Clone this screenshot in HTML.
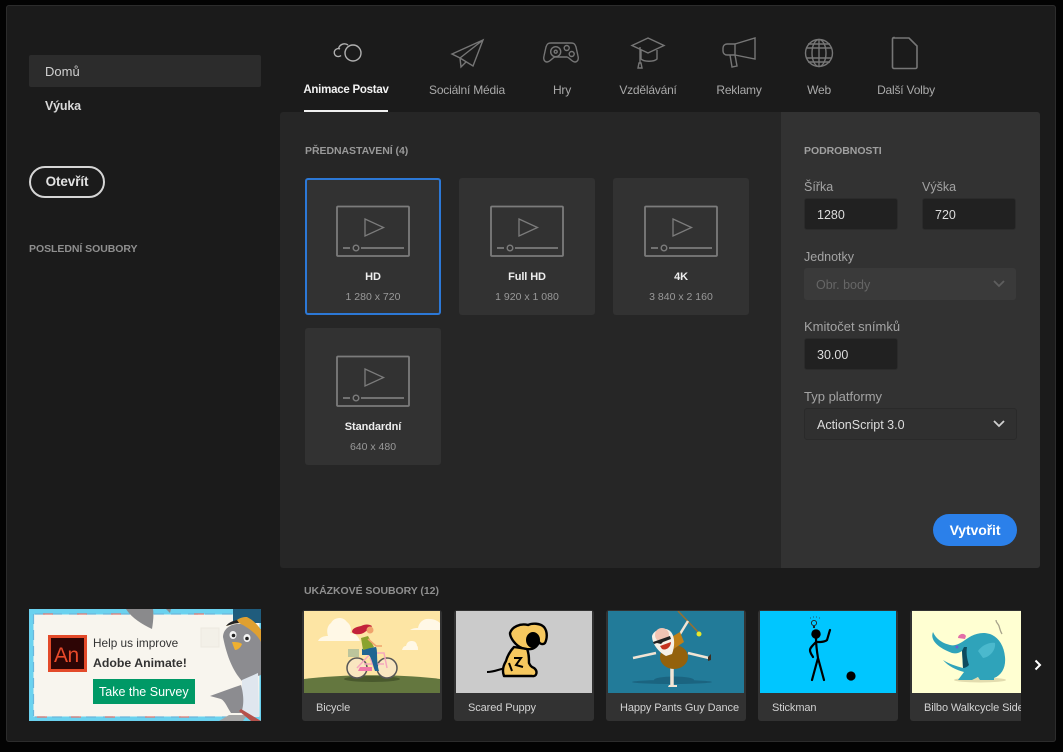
<!DOCTYPE html>
<html lang="cs"><head><meta charset="utf-8"><title>Adobe Animate</title>
<style>
html,body{margin:0;padding:0;width:1063px;height:752px;overflow:hidden;background:#030303;font-family:"Liberation Sans",sans-serif;}
.a{position:absolute;white-space:nowrap;}
.t{position:absolute;white-space:nowrap;font-size:12px;line-height:14px;letter-spacing:-.2px;text-align:center;color:#a9a9a9;}
.h{position:absolute;white-space:nowrap;font-size:10.5px;line-height:12px;font-weight:bold;color:#8f8f8f;letter-spacing:-.05px;}
.card{position:absolute;width:136px;height:137px;background:#323232;border-radius:3px;}
.card svg{position:absolute;left:31px;top:27px;}
.card b{position:absolute;left:0;right:0;top:92px;text-align:center;font-size:11px;line-height:14px;color:#eee;letter-spacing:-.1px;}
.card i{position:absolute;left:0;right:0;top:112px;text-align:center;font-style:normal;font-size:10.5px;line-height:14px;color:#999;}
.lab{position:absolute;font-size:13px;line-height:16px;color:#a3a3a3;white-space:nowrap;}
.inp{position:absolute;height:32px;background:#212121;border:1px solid #2b2b2b;border-radius:3px;box-sizing:border-box;color:#ddd;font-size:12.5px;line-height:31px;padding-left:12px;padding-top:1px;}
.s{position:absolute;width:140px;height:111px;top:610px;background:#323232;border-radius:3px;overflow:hidden;}
.s svg{position:absolute;left:2px;top:1px;display:block;}
.s span{position:absolute;left:14px;top:91px;font-size:11px;line-height:14px;color:#d2d2d2;white-space:nowrap;letter-spacing:-.1px;}
</style></head><body>
<div class="a" style="left:6px;top:5px;width:1050px;height:737px;background:#1b1b1b;border-radius:3px;box-shadow:0 0 0 1px #2c2c2c inset;"></div>

<div class="a" style="left:29px;top:55px;width:232px;height:32px;background:#2c2c2c;border-radius:2px;"></div>
<div class="a" style="left:45px;top:65px;font-size:13px;line-height:14px;color:#d0d0d0;">Domů</div>
<div class="a" style="left:45px;top:99px;font-size:12.5px;line-height:14px;font-weight:bold;color:#d8d8d8;letter-spacing:-.2px;">Výuka</div>
<div class="a" style="left:29px;top:166px;width:76px;height:32px;box-sizing:border-box;border:2px solid #d5d5d5;border-radius:16px;text-align:center;font-size:13.5px;line-height:28px;font-weight:bold;color:#e2e2e2;letter-spacing:-.1px;">Otevřít</div>
<div class="h" style="left:29px;top:243px;">POSLEDNÍ SOUBORY</div>

<!-- Top icons -->
<svg class="a" style="left:320px;top:30px;" width="640" height="50" viewBox="320 30 640 50" fill="none" stroke="#767676" stroke-width="1.400">
<g stroke="#b0b0b0"><circle cx="353" cy="53" r="8"/><path d="M338.500 49A6 6 0 0 1 348 45"/><path d="M340 49A4 4 0 1 0 341 55.500"/></g>
<path d="M483 40L452 54 460 58 473 66zM483 40L460 58 461 67 466 62"/>
<g><path d="M553 43h18c3 0 4 1 5 4l2 9c1 4-1 6-3 6-3 0-5-4-8-5h-12c-3 1-5 5-8 5-2 0-4-2-3-6l2-9c1-3 2-4 5-4z"/><circle cx="555.700" cy="51.700" r="5"/><circle cx="555.700" cy="51.700" r="1.500"/><circle cx="566.700" cy="48" r="2.500"/><circle cx="571.700" cy="54" r="2.500"/></g>
<g><path d="M648 38l16 7.500-16 7.500-16-7.500z"/><path d="M641 50v9c3 3 13 3 16 0v-9"/><path d="M640 47v16"/><path d="M638 68l1-5h2l1 5z"/></g>
<g><path d="M735 44h-8a4 4 0 0 0-4 4v3a4 4 0 0 0 4 4h8z"/><path d="M735 44l20-6v21l-20-4"/><path d="M730 55l2 12 5-1-2-11"/></g>
<g><circle cx="819" cy="53" r="13.500"/><ellipse cx="819" cy="53" rx="7" ry="13.500"/><path d="M819 39.500v27M806 48h26M806 58h26M808 44h22M808 62h22"/></g>
<path stroke-width="1.600" d="M894 38h15l8 8v21a1.500 1.500 0 0 1-1.500 1.500h-21.500a1.500 1.500 0 0 1-1.500-1.500v-28a1.500 1.500 0 0 1 1.500-1.500z"/>
</svg>

<div class="t" style="left:298px;top:83px;width:96px;color:#f2f2f2;font-weight:bold;font-size:11.500px;letter-spacing:-.25px;">Animace Postav</div>
<div class="a" style="left:304px;top:110px;width:84px;height:2px;background:#f0f0f0;"></div>
<div class="t" style="left:417px;top:83px;width:100px;">Sociální Média</div>
<div class="t" style="left:542px;top:83px;width:40px;">Hry</div>
<div class="t" style="left:608px;top:83px;width:80px;">Vzdělávání</div>
<div class="t" style="left:704px;top:83px;width:70px;">Reklamy</div>
<div class="t" style="left:799px;top:83px;width:40px;">Web</div>
<div class="t" style="left:866px;top:83px;width:80px;">Další Volby</div>

<!-- Main panel -->
<div class="a" style="left:280px;top:112px;width:760px;height:456px;background:#262626;border-radius:3px;overflow:hidden;">
  <div class="a" style="left:501px;top:0;width:259px;height:456px;background:#323232;"></div>
</div>
<div class="h" style="left:305px;top:145px;color:#999;">PŘEDNASTAVENÍ (4)</div>

<div class="card" style="left:305px;top:178px;box-sizing:border-box;box-shadow:inset 0 0 0 2px #2c78d6;">
<svg width="74" height="60" viewBox="0 0 74 60" fill="none" stroke="#7c7c7c" stroke-width="1.800"><rect x="1" y="1.500" width="72" height="49.500" rx="1"/><path stroke-width="1.300" d="M29 14l18.500 8.500-18.500 8.500z"/><path d="M7 43h7M25 43h43"/><circle cx="20" cy="43" r="2.800" stroke-width="1.400"/></svg>
<b>HD</b><i>1 280 x 720</i></div>
<div class="card" style="left:459px;top:178px;">
<svg width="74" height="60" viewBox="0 0 74 60" fill="none" stroke="#7c7c7c" stroke-width="1.800"><rect x="1" y="1.500" width="72" height="49.500" rx="1"/><path stroke-width="1.300" d="M29 14l18.500 8.500-18.500 8.500z"/><path d="M7 43h7M25 43h43"/><circle cx="20" cy="43" r="2.800" stroke-width="1.400"/></svg>
<b>Full HD</b><i>1 920 x 1 080</i></div>
<div class="card" style="left:613px;top:178px;">
<svg width="74" height="60" viewBox="0 0 74 60" fill="none" stroke="#7c7c7c" stroke-width="1.800"><rect x="1" y="1.500" width="72" height="49.500" rx="1"/><path stroke-width="1.300" d="M29 14l18.500 8.500-18.500 8.500z"/><path d="M7 43h7M25 43h43"/><circle cx="20" cy="43" r="2.800" stroke-width="1.400"/></svg>
<b>4K</b><i>3 840 x 2 160</i></div>
<div class="card" style="left:305px;top:328px;">
<svg width="74" height="60" viewBox="0 0 74 60" fill="none" stroke="#7c7c7c" stroke-width="1.800"><rect x="1" y="1.500" width="72" height="49.500" rx="1"/><path stroke-width="1.300" d="M29 14l18.500 8.500-18.500 8.500z"/><path d="M7 43h7M25 43h43"/><circle cx="20" cy="43" r="2.800" stroke-width="1.400"/></svg>
<b>Standardní</b><i>640 x 480</i></div>

<!-- Details -->
<div class="h" style="left:804px;top:145px;color:#a0a0a0;">PODROBNOSTI</div>
<div class="lab" style="left:804px;top:179px;font-size:12.5px;">Šířka</div>
<div class="lab" style="left:922px;top:179px;font-size:12.5px;">Výška</div>
<div class="inp" style="left:804px;top:198px;width:94px;">1280</div>
<div class="inp" style="left:922px;top:198px;width:94px;">720</div>
<div class="lab" style="left:804px;top:249px;font-size:12.5px;">Jednotky</div>
<div class="inp" style="left:804px;top:268px;width:212px;background:#3a3a3a;border-color:#3a3a3a;color:#666;padding-left:11px;">Obr. body</div>
<svg class="a" style="left:993px;top:280px;" width="12" height="8" fill="none" stroke="#5e5e5e" stroke-width="1.800"><path d="M1 1l5 5 5-5"/></svg>
<div class="lab" style="left:804px;top:319px;">Kmitočet snímků</div>
<div class="inp" style="left:804px;top:338px;width:94px;">30.00</div>
<div class="lab" style="left:804px;top:389px;">Typ platformy</div>
<div class="inp" style="left:804px;top:408px;width:213px;background:#303030;border-color:#2a2a2a;">ActionScript 3.0</div>
<svg class="a" style="left:993px;top:420px;" width="12" height="8" fill="none" stroke="#d0d0d0" stroke-width="1.800"><path d="M1 1l5 5 5-5"/></svg>
<div class="a" style="left:933px;top:514px;width:84px;height:32px;border-radius:16px;background:#2b80ea;color:#fff;font-size:14px;font-weight:bold;line-height:32px;text-align:center;letter-spacing:-.1px;">Vytvořit</div>

<!-- Samples -->
<div class="h" style="left:304px;top:585px;color:#8f8f8f;">UKÁZKOVÉ SOUBORY (12)</div>

<div class="s" style="left:302px;">
<svg width="136" height="82" viewBox="0 0 136 82"><rect width="136" height="82" fill="#fde5a4"/>
<path d="M14 30c2-4 6-5 10-5-2-6 0-11 3-13 3-6 12-7 16-1 4 3 5 8 3 11 5 0 8 3 10 8z" fill="#fff8e6"/>
<path d="M106 19c3-2 6-2 8-2 1-6 6-10 12-9 4 0 8 2 10 4v7z" fill="#fff8e6"/>
<path d="M98 39c1-3 2-4 4-4 1-4 3-5 6-5 3 0 5 2 5 5 1 0 1 2 1 4z" fill="#fff8e6"/>
<path d="M0 68c40-5 96-5 136 0v14H0z" fill="#64773f"/>
<ellipse cx="68" cy="68" rx="28" ry="3" fill="#49592d"/>
<g fill="#f9e6c0" stroke="#575757" stroke-width="1.500"><circle cx="53" cy="57" r="10"/><circle cx="83" cy="57" r="10"/></g>
<path d="M53 57l14-15h13l3 15M60 53h20M66 47l5 11" fill="none" stroke="#f5a6bd" stroke-width="1.500"/>
<rect x="44" y="38" width="11" height="8" fill="#bcc59c"/>
<path d="M58 38l14-2c2 4 0 14 3 24h-4c-2-5-3-12-6-16h-7z" fill="#1f6592"/>
<path d="M57 27l7-2 6 11-11 3z" fill="#8aa32e"/>
<path d="M64 28l8 7h6" fill="none" stroke="#f0a36c" stroke-width="1.500"/>
<path d="M48 21c0-4 5-5 9-6 4-2 8-2 11 0-2 4-5 4-7 6-4 3-11 3-13 0z" fill="#c3213a"/>
<circle cx="66" cy="19" r="3.500" fill="#f0a36c"/>
<path d="M56 56h12v4H54z" fill="#f078a8"/></svg>
<span>Bicycle</span></div>

<div class="s" style="left:454px;">
<svg width="136" height="82" viewBox="0 0 136 82"><rect width="136" height="82" fill="#cbcbcb"/>
<path d="M31 61c8 0 12-3 19-4" fill="none" stroke="#000" stroke-width="2"/>
<path d="M58 36c-4 4-7 10-8 14-3 5-4 10-2 15h28c5 1 6-5 2-8-3-1-4-3-5-5 0-5 0-10-2-14z" fill="#f6c85f" stroke="#000" stroke-width="2.400" stroke-linejoin="round"/>
<path d="M54 22c2-6 10-10 18-8 4-2 12-2 16 2 4 5 3 12 1 16-2 2-5 1-6-1-2 5-6 8-12 7l-5-1c-6-2-12-10-12-15z" fill="#f6c85f" stroke="#000" stroke-width="2.400" stroke-linejoin="round"/>
<ellipse cx="77" cy="29" rx="7" ry="8" fill="#000"/>
<path d="M58 47h7l-5 7 7 2M53 52l3 8" fill="none" stroke="#000" stroke-width="2"/></svg>
<span>Scared Puppy</span></div>

<div class="s" style="left:606px;">
<svg width="136" height="82" viewBox="0 0 136 82"><rect width="136" height="82" fill="#227b99"/>
<ellipse cx="64" cy="71" rx="40" ry="2" fill="#1b6480"/>
<ellipse cx="66" cy="69" rx="20" ry="3.500" fill="#1b6480"/>
<path d="M70 0l21 22" stroke="#9a6f2f" stroke-width="1.500"/>
<circle cx="91" cy="23" r="2.500" fill="#e6e82c"/>
<path d="M72 23l8-13" stroke="#f1e4d4" stroke-width="2.500"/>
<path d="M48 42L25 47M80 42l21 5" stroke="#f1e4d4" stroke-width="2.500"/>
<path d="M100 46l3-3 0 6-3 1z" fill="#3c3024"/>
<path d="M64 74V56" stroke="#f1e4d4" stroke-width="3.500"/>
<path d="M60 76h9v-2h-8z" fill="#f1e4d4"/>
<ellipse cx="66" cy="46" rx="14" ry="12" fill="#93610c"/>
<path d="M60 28l12-7 4 10-12 8z" fill="#c07f16"/>
<path d="M44 25c2-7 14-10 19-4 4 5 4 14 1 22l-6 2c-6-3-14-11-14-20z" fill="#f6f0e6"/>
<circle cx="54" cy="24" r="7" fill="#f1c4b3"/>
<path d="M45 31l17-6 1 3-8 3-2 2-4-1-3 1z" fill="#222"/>
<path d="M52 35l11-4c0 5-5 9-9 7z" fill="#c5321f"/></svg>
<span>Happy Pants Guy Dance</span></div>

<div class="s" style="left:758px;">
<svg width="136" height="82" viewBox="0 0 136 82"><rect width="136" height="82" fill="#00c6ff"/>
<circle cx="56" cy="23" r="4.700" fill="#000"/>
<path d="M56 27c0 7 1 14 2 20l-6 22M58 47l6 22M57 31c4 0 8 0 10-2 1-3 2-7 3-10M56 31c-3 3-6 6-6 8 0 3 2 5 3 7" fill="none" stroke="#000" stroke-width="2.200" stroke-linecap="round"/>
<circle cx="91" cy="65" r="4.600" fill="#000"/>
<circle cx="54" cy="12" r="2.600" fill="none" stroke="#222" stroke-width=".9"/>
<path d="M53 15h2v2h-2z" fill="#222"/>
<path d="M50 7h1M53 6h1M56 6h1M59 7h1" stroke="#333" stroke-width=".7"/></svg>
<span>Stickman</span></div>

<div class="s" style="left:910px;width:111px;border-radius:3px 0 0 3px;">
<svg width="109" height="82" viewBox="0 0 109 82"><rect width="109" height="82" fill="#ffffd2"/>
<ellipse cx="68" cy="69" rx="26" ry="2.500" fill="#e2dcae"/>
<path d="M21 21C18 28 24 36 40 42 44 43 47 42 50 40L51 57C44 55 37 53 31 49 36 55 44 59 52 61L46 69H60L66 66 68 69H82V67C90 64 94 56 93 46 92 34 86 26 78 23 68 20 60 24 53 29 46 34 42 35 38 34 30 32 24 28 21 21z" fill="#2fa3ba"/>
<path d="M52 36l-2 4 1 17c2 0 4-1 6-3-2-6-3-12-2-18z" fill="#0d4b5e"/>
<path d="M46 27c0-4 6-6 8-2l-1 3z" fill="#e36fa8"/>
<circle cx="45" cy="36" r="1.500" fill="#6b5fd0"/>
<path d="M66 40c4-6 12-9 17-8 1 7-5 14-12 15z" fill="#4bb9cd"/>
<path d="M90 23c-2-3-2-5-3-8-1-3-3-3-3-6" fill="none" stroke="#a8a48c" stroke-width="1.300"/></svg>
<span style="width:109px;overflow:hidden;">Bilbo Walkcycle Side</span></div>

<svg class="a" style="left:1033px;top:659px;" width="10" height="12" fill="none" stroke="#fff" stroke-width="2"><path d="M2.500 1.500l4.500 4.500-4.500 4.500"/></svg>

<!-- Survey banner -->
<div class="a" style="left:29px;top:609px;width:232px;height:112px;overflow:hidden;">
<svg width="232" height="112" viewBox="0 0 232 112" style="display:block;">
<rect width="232" height="112" fill="#6bd2ef"/>
<rect x="4.500" y="5.500" width="226" height="102" fill="#f8f5ee"/>
<path d="M6 5h220" stroke="#6bb7dc" stroke-width="1.200" stroke-dasharray="10 7"/>
<path d="M14 5h10M48 5h10M82 5h10M165 5h10" stroke="#de7a75" stroke-width="1.200"/>
<path d="M6 108h220" stroke="#6bb7dc" stroke-width="1.200" stroke-dasharray="10 7"/>
<path d="M8 108h10M42 108h10M76 108h10M116 108h10M150 108h10" stroke="#de7a75" stroke-width="1.200"/>
<path d="M4.500 5v102" stroke="#6bb7dc" stroke-width="1.200" stroke-dasharray="10 6"/>
<rect x="172" y="19" width="18" height="19" fill="#f3f0e8" stroke="#ece9e0"/>
<path d="M97 0c5 8 15 15 26 20 1-6 2-14 1-20z" fill="#8a8a8c"/>
<path d="M137 0l4 4 1-4z" fill="#8a8a8c"/>
<rect x="19" y="26" width="39" height="37" fill="#e34a2a"/>
<rect x="22" y="29" width="33" height="31" fill="#2d0505"/>
<rect x="204" y="0" width="28" height="14" fill="#1f5c7d"/>
<path d="M194 28C194 20 202 14 212 15L232 20V66L213 72C204 62 198 48 194 28z" fill="#8c8c90"/>
<path d="M197 17c4-4 8-5 11-6 4-3 8-3 10-3 6 3 11 8 14 13v12c-4-8-12-14-22-19-4 0-9 2-13 3z" fill="#e0a030"/>
<path d="M197 17c3-4 7-5 11-6l2 3c-4 0-9 2-13 3z" fill="#222"/>
<ellipse cx="204" cy="26" rx="3.500" ry="4" fill="#f4f4f4"/><ellipse cx="218" cy="29" rx="3.500" ry="4" fill="#f4f4f4"/>
<circle cx="204.500" cy="26.500" r="1.800" fill="#222"/><circle cx="218" cy="29.500" r="1.800" fill="#222"/>
<path d="M203 33c3 0 8 0 10 2-1 3-4 6-7 6-1-2-2-5-3-8z" fill="#eeb030"/>
<path d="M213 71l16-7 1 44-17 0z" fill="#dfe6ee"/>
<path d="M181 87l25-9 6-2c4 14 2 24 0 28h-10c-4-6-6-12-10-14z" fill="#8c8c90"/>
<path d="M190 112l10-6 18 0-4 6z" fill="#a5a5a5"/>
<path d="M212 100l20 12h-10l-12-10z" fill="#b6504a"/>
<rect x="64" y="70" width="102" height="25" fill="#009966"/>
<text x="25" y="53" font-family="Liberation Sans,sans-serif" font-size="21" fill="#e8492a" letter-spacing="-.5">An</text>
<text x="64" y="38" font-family="Liberation Sans,sans-serif" font-size="11.800" fill="#333">Help us improve</text>
<text x="64" y="58" font-family="Liberation Sans,sans-serif" font-size="12.300" font-weight="bold" fill="#333">Adobe Animate!</text>
<text x="70" y="87" font-family="Liberation Sans,sans-serif" font-size="12.500" fill="#fff">Take the Survey</text>
</svg></div>
</body></html>
